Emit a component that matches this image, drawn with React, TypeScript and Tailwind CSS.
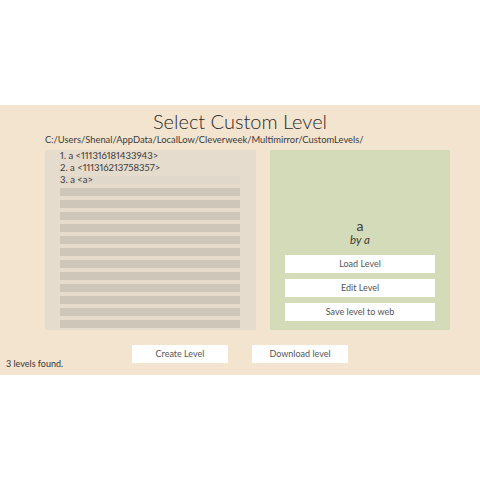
import React from 'react'

const levels = ['a <111316181433943>', 'a <111316213758357>', 'a <a>']

export default function App() {
  const rows = Array.from({ length: 15 }, (_, i) => i)

  return (
    <div className="w-[480px] h-[480px] bg-white pt-[105px] text-[#333333] proportional-nums" style={{ fontFamily: 'Lato, "Noto Sans", sans-serif' }}>
      <div className="h-[270px] bg-[#f3e4cf] flex flex-col">
        {/* Header */}
        <div className="mt-[4px] text-center text-[20px] leading-[24px] font-light text-[#2a2a2a]">Select Custom Level</div>
        <div className="mt-[1px] pl-[45px] text-[9.4px] leading-[12px] text-[#3a3a3a]">
          C:/Users/Shenal/AppData/LocalLow/Cleverweek/Multimirror/CustomLevels/
        </div>

        {/* Panels */}
        <div className="mt-[4px] flex pl-[45px]">
          <div className="w-[211px] h-[180px] bg-[#e6dccd] pt-[2px] pl-[15px] overflow-hidden">
            {rows.map((i) => (
              <div
                key={i}
                className={
                  'w-[180px] h-[8px] mb-[4px] text-[9.5px] leading-[8px] whitespace-nowrap text-[#3a3a3a] ' +
                  (i < 2 ? '' : i === 2 ? 'bg-[#e0d8ca]' : 'bg-[#cec6b8]')
                }
              >
                {i < levels.length ? `${i + 1}. ${levels[i]}` : ''}
              </div>
            ))}
          </div>

          <div className="ml-[14px] w-[180px] h-[180px] bg-[#d4dbb8] flex flex-col items-center justify-end pb-[9px]">
            <div className="mb-[2px] text-[14px] leading-[13px] text-[#3a3a3a]">a</div>
            <div className="text-[11.5px] leading-[12px] italic text-[#3a3a3a]">by a</div>
            <div className="mt-[9px] flex flex-col gap-[6px]">
              <button className="w-[150px] h-[18px] bg-white text-[9px] text-[#555555]">Load Level</button>
              <button className="w-[150px] h-[18px] bg-white text-[9px] text-[#555555]">Edit Level</button>
              <button className="w-[150px] h-[18px] bg-white text-[9px] text-[#555555]">Save level to web</button>
            </div>
          </div>
        </div>

        {/* Footer */}
        <div className="mt-[15px] flex h-[30px]">
          <div className="w-[132px] self-end mb-[5px] pl-[6px] text-[9px] leading-[12px] text-[#333333]">3 levels found.</div>
          <button className="w-[96px] h-[18px] bg-white text-[9px] text-[#555555]">Create Level</button>
          <button className="ml-[24px] w-[96px] h-[18px] bg-white text-[9px] text-[#555555]">Download level</button>
        </div>
      </div>
    </div>
  )
}
